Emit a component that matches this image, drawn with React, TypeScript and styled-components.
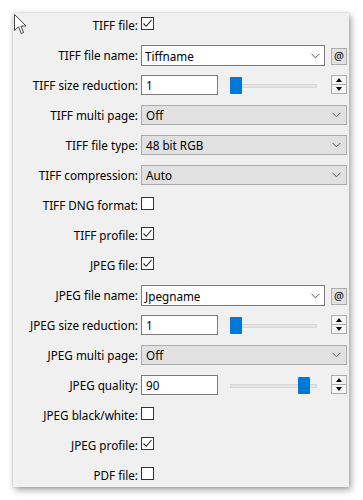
import React from "react";
import styled, { createGlobalStyle } from "styled-components";

const Global = createGlobalStyle`
  html, body { margin: 0; padding: 0; background: #ffffff; }
  body { font-family: "Noto Sans", "Open Sans", sans-serif; font-size: 12px; color: #000; }
`;

const Page = styled.div`
  position: relative;
  width: 363px;
  height: 500px;
  padding: 13px 0 0 13px;
  box-sizing: border-box;
`;

const Panel = styled.div`
  width: 336px;
  height: 474px;
  box-sizing: border-box;
  background: #f0f0f0;
  box-shadow: 2px 3px 7px rgba(0, 0, 0, 0.35), 0 0 3px rgba(0, 0, 0, 0.15);
  display: flex;
  flex-direction: column;
  padding-right: 2px;
`;

const Row = styled.div`
  display: grid;
  grid-template-columns: 125px 1fr;
  column-gap: 3px;
  height: 30px;
  flex-shrink: 0;
  align-items: start;
  padding-top: 2px;
  box-sizing: border-box;
`;

const Label = styled.div`
  text-align: right;
  line-height: 20px;
  white-space: nowrap;
  font-size: 11.7px;
`;

const Controls = styled.div`
  display: flex;
  align-items: flex-start;
  min-width: 0;
`;

const CheckBox = styled.div`
  width: 13px;
  height: 13px;
  box-sizing: border-box;
  border: 1px solid #333333;
  background: #ffffff;
  margin-top: 2px;
  display: flex;
  align-items: center;
  justify-content: center;
`;

const TextBox = styled.div<{ $w: number }>`
  width: ${(p) => p.$w}px;
  height: 20px;
  box-sizing: border-box;
  border: 1px solid #7a7a7a;
  background: #ffffff;
  padding-left: 4px;
  line-height: 18px;
  font-size: 11.7px;
`;

const Combo = styled.div`
  width: 184px;
  height: 21px;
  box-sizing: border-box;
  border: 1px solid #7a7a7a;
  background: #ffffff;
  padding: 0 4px 0 3px;
  display: flex;
  align-items: center;
  justify-content: space-between;
  font-size: 11.7px;
`;

const AtButton = styled.div`
  width: 16px;
  height: 17px;
  box-sizing: border-box;
  margin: 3px 0 0 6px;
  border: 1px solid #adadad;
  background: #e1e1e1;
  font-size: 11px;
  line-height: 14px;
  text-align: center;
`;

const Select = styled.div`
  width: 206px;
  height: 20px;
  box-sizing: border-box;
  border: 1px solid #adadad;
  background: #e1e1e1;
  padding: 0 5px 0 4px;
  display: flex;
  align-items: center;
  justify-content: space-between;
  font-size: 11.7px;
`;

const Slider = styled.div`
  position: relative;
  width: 87px;
  height: 20px;
  margin-left: 12px;
  display: flex;
  align-items: center;
`;

const Track = styled.div`
  width: 100%;
  height: 4px;
  box-sizing: border-box;
  background: #e7e7e7;
  border: 1px solid #d6d6d6;
  margin-top: 1px;
`;

const Thumb = styled.div`
  position: absolute;
  top: 2px;
  width: 12px;
  height: 17px;
  background: #0078d7;
  border-radius: 1px;
`;

const Spinner = styled.div`
  margin-left: auto;
  width: 16px;
  height: 19px;
  box-sizing: border-box;
  border: 1px solid #adadad;
  background: #f4f4f4;
  display: flex;
  flex-direction: column;
`;

const SpinHalf = styled.div<{ $down?: boolean }>`
  flex: 1;
  display: flex;
  align-items: center;
  justify-content: center;
  border-top: ${(p) => (p.$down ? "1px solid #adadad" : "none")};
`;

const Tri = styled.div<{ $down?: boolean }>`
  width: 0;
  height: 0;
  border-left: 3.5px solid transparent;
  border-right: 3.5px solid transparent;
  ${(p) => (p.$down ? "border-top: 4px solid #000;" : "border-bottom: 4px solid #000;")}
`;

const Cursor = styled.svg`
  position: absolute;
  left: 14px;
  top: 14px;
`;

const Check = () => (
  <svg width="11" height="11" viewBox="0 0 11 11">
    <path d="M1.5 5.5 L4.2 8.3 L9.5 2" fill="none" stroke="#222" strokeWidth="1.1" />
  </svg>
);

const Chevron = () => (
  <svg width="9" height="6" viewBox="0 0 9 6">
    <path d="M0.5 0.8 L4.5 4.8 L8.5 0.8" fill="none" stroke="#555" strokeWidth="1" />
  </svg>
);

const CheckRow = ({ label, checked }: { label: string; checked?: boolean }) => (
  <Row>
    <Label>{label}</Label>
    <Controls>
      <CheckBox>{checked && <Check />}</CheckBox>
    </Controls>
  </Row>
);

const NameRow = ({ label, value }: { label: string; value: string }) => (
  <Row>
    <Label>{label}</Label>
    <Controls>
      <Combo>
        <span>{value}</span>
        <Chevron />
      </Combo>
      <AtButton>@</AtButton>
    </Controls>
  </Row>
);

const SliderRow = ({ label, value, pos }: { label: string; value: string; pos: number }) => (
  <Row>
    <Label>{label}</Label>
    <Controls>
      <TextBox $w={77}>{value}</TextBox>
      <Slider>
        <Track />
        <Thumb style={{ left: pos }} />
      </Slider>
      <Spinner>
        <SpinHalf>
          <Tri />
        </SpinHalf>
        <SpinHalf $down>
          <Tri $down />
        </SpinHalf>
      </Spinner>
    </Controls>
  </Row>
);

const SelectRow = ({ label, value }: { label: string; value: string }) => (
  <Row>
    <Label>{label}</Label>
    <Controls>
      <Select>
        <span>{value}</span>
        <Chevron />
      </Select>
    </Controls>
  </Row>
);

export default function App() {
  return (
    <>
      <Global />
      <Page>
        <Panel>
          <CheckRow label="TIFF file:" checked />
          <NameRow label="TIFF file name:" value="Tiffname" />
          <SliderRow label="TIFF size reduction:" value="1" pos={0} />
          <SelectRow label="TIFF multi page:" value="Off" />
          <SelectRow label="TIFF file type:" value="48 bit RGB" />
          <SelectRow label="TIFF compression:" value="Auto" />
          <CheckRow label="TIFF DNG format:" />
          <CheckRow label="TIFF profile:" checked />
          <CheckRow label="JPEG file:" checked />
          <NameRow label="JPEG file name:" value="Jpegname" />
          <SliderRow label="JPEG size reduction:" value="1" pos={0} />
          <SelectRow label="JPEG multi page:" value="Off" />
          <SliderRow label="JPEG quality:" value="90" pos={68} />
          <CheckRow label="JPEG black/white:" />
          <CheckRow label="JPEG profile:" checked />
          <CheckRow label="PDF file:" />
        </Panel>
        <Cursor width="14" height="22" viewBox="0 0 14 22">
          <path d="M0.5 0.5 L0.5 16.5 L4.5 12.8 L7.3 19.5 L9.6 18.5 L6.9 12 L12 12 Z" fill="#fff" stroke="#444" strokeWidth="1" />
        </Cursor>
      </Page>
    </>
  );
}
